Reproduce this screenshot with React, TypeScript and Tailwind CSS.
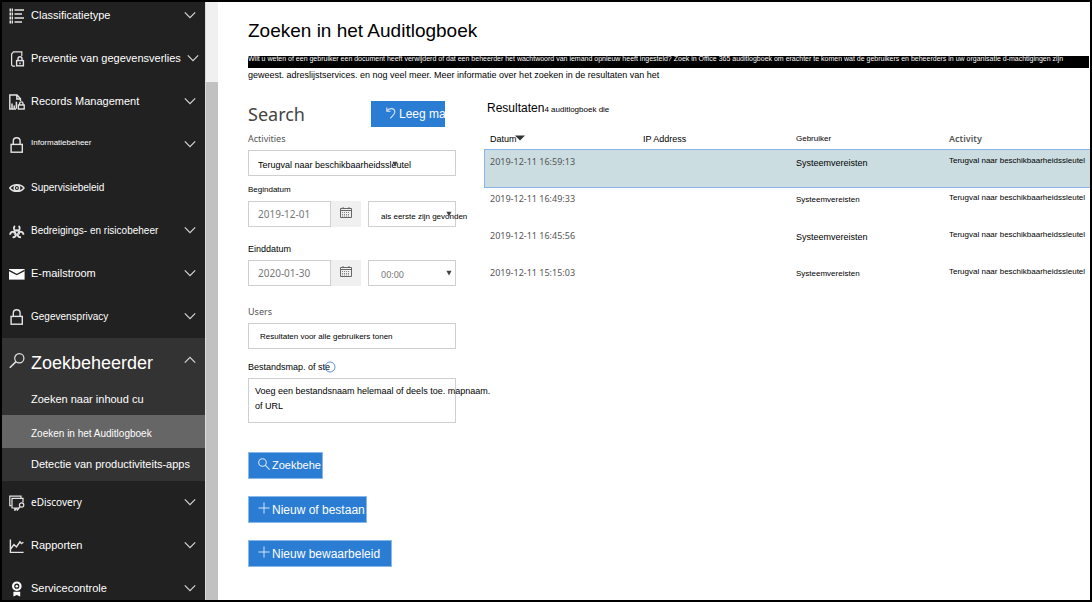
import React from "react";

const Icon = ({ children }: { children: React.ReactNode }) => (
  <svg viewBox="0 0 16 16" className="h-4 w-4 shrink-0" fill="none" stroke="#e4e4e4" strokeWidth="1.2" aria-hidden="true">
    {children}
  </svg>
);

const ListIcon = () => (
  <Icon>
    <path d="M5.5 2H15M5.5 6H13M5.5 10H15M5.5 14H13" strokeWidth="1.4" />
    <path d="M0.5 2H4M0.5 6H4M0.5 10H4M0.5 14H4" strokeWidth="3" strokeDasharray="1.5 0.6" />
  </Icon>
);
const PolicyIcon = () => (
  <Icon>
    <path d="M6 15.2H3.8L2.6 14V3L4.5 0.8H12.8V5" />
    <rect x="7.6" y="9.6" width="6.8" height="5.2" strokeWidth="1.4" />
    <path d="M9 9.5V7.8a2 2 0 0 1 4 0V9.5M11 11.5v1.8" strokeWidth="1.4" />
  </Icon>
);
const RecordsIcon = () => (
  <Icon>
    <path d="M7 15H0.8V1H8L11.5 4.8V7M7.8 1V5H11.5" strokeWidth="1.4" />
    <path d="M3 14.8V9.5M5.2 14.8V11.5M7.4 14.8V7.8" strokeWidth="1.5" />
    <rect x="9.4" y="11" width="5.8" height="4" strokeWidth="1.4" />
    <path d="M10.6 11V9.6a1.7 1.7 0 0 1 3.4 0V11" strokeWidth="1.4" />
  </Icon>
);
const LockIcon = () => (
  <Icon>
    <rect x="2.1" y="7.4" width="11.2" height="7.8" strokeWidth="1.4" />
    <path d="M4.3 7.4V4.2a3.4 3.4 0 0 1 6.8 0V7.4" strokeWidth="1.4" />
  </Icon>
);
const EyeIcon = () => (
  <Icon>
    <path d="M0.8 8C3.6 3.6 12.2 3.6 15 8C12.2 12.4 3.6 12.4 0.8 8Z" strokeWidth="1.4" />
    <circle cx="7.9" cy="8" r="2.7" strokeWidth="1.4" />
    <circle cx="7.9" cy="8" r="0.9" fill="#e4e4e4" stroke="none" />
  </Icon>
);
const HazardIcon = () => (
  <Icon>
    <circle cx="7.8" cy="9.6" r="2.9" strokeWidth="1" />
    <path d="M6 3C4 4.6 4.6 8 7.8 8C11 8 11.6 4.6 9.6 3" strokeWidth="1.8" />
    <path d="M1.2 11.8C1 8.8 4.8 7.8 6.6 9.8C8 12.2 6.4 14.6 3.6 14.2" strokeWidth="1.8" />
    <path d="M14.4 11.8C14.6 8.8 10.8 7.8 9 9.8C7.6 12.2 9.2 14.6 12 14.2" strokeWidth="1.8" />
    <circle cx="7.8" cy="9.4" r="0.9" fill="#212121" stroke="none" />
  </Icon>
);
const MailIcon = () => (
  <Icon>
    <path d="M0 3H15.6V13.6H0Z" fill="#fff" stroke="none" />
    <path d="M0 4.4L7.8 8.6L15.6 4.4" stroke="#212121" strokeWidth="1.3" />
  </Icon>
);
const SearchIcon = () => (
  <Icon>
    <circle cx="10.3" cy="5.3" r="4.6" />
    <path d="M7 8.6L0.8 14.8" strokeWidth="1.5" />
  </Icon>
);
const DiscoveryIcon = () => (
  <Icon>
    <path d="M2.5 10.6H0.8V1.2H12V3" />
    <path d="M9 13H3V3.4H14V7.5M5.8 13V15.4L8 13" />
    <circle cx="12.6" cy="10" r="2.2" />
    <path d="M11 11.8L7.8 15.4" strokeWidth="1.5" />
  </Icon>
);
const ChartIcon = () => (
  <Icon>
    <path d="M1.4 1.6V14.4H14.6" strokeWidth="1.4" />
    <path d="M1.6 11L5 6.6L7.4 9L11 3.8L12.4 5.6L14.4 4.2" strokeWidth="1.4" />
  </Icon>
);
const BadgeIcon = () => (
  <Icon>
    <circle cx="7.8" cy="5.2" r="3.7" stroke="#fff" strokeWidth="2.2" />
    <circle cx="7.8" cy="5.2" r="1.3" fill="#fff" stroke="none" />
    <path d="M4.4 10.8H11.2V15.6L7.8 14L4.4 15.6Z" fill="#fff" stroke="none" />
  </Icon>
);

const Chevron = ({ up }: { up?: boolean }) => (
  <svg viewBox="0 0 12 8" className="mb-[2px] ml-auto h-2 w-3 shrink-0" fill="none" stroke="#d6d6d6" strokeWidth="1.2" aria-hidden="true">
    <path d={up ? "M0.8 6.6L6 1.4L11.2 6.6" : "M0.8 1.4L6 6.6L11.2 1.4"} />
  </svg>
);

type Item = { label: string; icon: React.ReactNode; size: string; open?: boolean };

const topItems: Item[] = [
  { label: "Classificatietype", icon: <ListIcon />, size: "text-[11px]", open: false },
  { label: "Preventie van gegevensverlies", icon: <PolicyIcon />, size: "text-[11px]", open: false },
  { label: "Records Management", icon: <RecordsIcon />, size: "text-[11px]", open: false },
  { label: "Informatiebeheer", icon: <LockIcon />, size: "text-[8px] pb-1", open: false },
  { label: "Supervisiebeleid", icon: <EyeIcon />, size: "text-[10px]" },
  { label: "Bedreigings- en risicobeheer", icon: <HazardIcon />, size: "text-[10px]", open: false },
  { label: "E-mailstroom", icon: <MailIcon />, size: "text-[11px]", open: false },
  { label: "Gegevensprivacy", icon: <LockIcon />, size: "text-[10px]", open: false },
];
const bottomItems: Item[] = [
  { label: "eDiscovery", icon: <DiscoveryIcon />, size: "font-['Noto_Sans',sans-serif] text-[10px]", open: false },
  { label: "Rapporten", icon: <ChartIcon />, size: "text-[11px]", open: false },
  { label: "Servicecontrole", icon: <BadgeIcon />, size: "text-[11px]", open: false },
];

const NavItem = ({ item }: { item: Item }) => (
  <button type="button" className="flex h-[43px] w-full shrink-0 items-center gap-[6px] pr-[9px] pl-[7px] text-left whitespace-nowrap">
    {item.icon}
    <span className={item.size}>{item.label}</span>
    {item.open !== undefined && <Chevron />}
  </button>
);

const Arrow = ({ className }: { className: string }) => (
  <svg viewBox="0 0 6 6" className={"pointer-events-none absolute h-[6px] w-[6px] " + className} aria-hidden="true">
    <path d="M0.4 0.8H5.6L3 5.6Z" fill="#444" />
  </svg>
);

const DateRow = ({ id, label, labelClass, date, time, timeClass }: { id: string; label: string; labelClass: string; date: string; time: string; timeClass: string }) => (
  <div className="flex flex-col gap-[5px]">
    <label htmlFor={id} className={"leading-3 text-black " + labelClass}>{label}</label>
    <div className="flex h-[26px]">
      <input id={id} type="text" defaultValue={date} className="w-[83px] border border-[#cfcfcf] bg-white pl-[9px] font-['Noto_Sans',sans-serif] text-[10px] text-[#777]" />
      <button type="button" aria-label={"Kalender " + label} className="flex w-[30px] items-center justify-center bg-[#f0f0f0] pb-[2px]">
        <svg viewBox="0 0 12 12" className="h-3 w-3" fill="none" stroke="#666" aria-hidden="true">
          <path d="M0.5 1.5H11.5V10.5H0.5ZM0.5 3.5H11.5M3 0V2M9 0V2" />
          <path d="M2 5.5H10M2 7.5H10M2 9H10" strokeDasharray="1 1" strokeWidth="0.8" />
        </svg>
      </button>
      <div className="relative ml-[7px] w-[88px] border border-[#cfcfcf]">
        <select aria-label={"Tijd " + label} className={"h-6 w-[104px] appearance-none bg-transparent pl-3 " + timeClass}>
          <option>{time}</option>
        </select>
        <Arrow className="top-[9px] right-[3px]" />
      </div>
    </div>
  </div>
);

const rows = [
  { date: "2019-12-11 16:59:13", user: "text-[9px]" },
  { date: "2019-12-11 16:49:33", user: "text-[8px]" },
  { date: "2019-12-11 16:45:56", user: "text-[9px]" },
  { date: "2019-12-11 15:15:03", user: "text-[8px]" },
];

const actionClass = "flex h-[27px] items-center border border-[#8ab8ea] bg-[#2b7cd3] pl-[9px] whitespace-nowrap text-white";

const Plus = () => (
  <svg viewBox="0 0 12 12" className="mr-[2px] mb-1 h-3 w-3 shrink-0" fill="none" stroke="#d5e5f6" strokeWidth="1" aria-hidden="true">
    <path d="M6 0.5V11.5M0.5 6H11.5" />
  </svg>
);

export default function App() {
  return (
    <div className="flex h-screen overflow-hidden border-2 border-black bg-white font-['Liberation_Sans',Arial,sans-serif] text-black">
      <nav className="w-[203px] shrink-0 overflow-hidden bg-[#212121] text-white">
        <div className="-mt-2 flex flex-col">
          {topItems.map((item) => <NavItem key={item.label} item={item} />)}
          <div className="shrink-0 bg-[#333333]">
            <button type="button" className="flex h-[45px] w-full items-center gap-[6px] pr-[9px] pl-[7px] text-left">
              <SearchIcon />
              <span className="pt-[6px] text-[18px]">Zoekbeheerder</span>
              <Chevron up />
            </button>
            <a href="#inhoud" className="flex h-8 items-center pl-[29px] text-[11px]">Zoeken naar inhoud cu</a>
            <a href="#audit" aria-current="page" className="flex h-[33px] items-center bg-[#666666] pt-1 pl-[29px] text-[10px]">Zoeken in het Auditlogboek</a>
            <a href="#apps" className="flex h-[33px] items-center pl-[29px] text-[11px]">Detectie van productiviteits-apps</a>
          </div>
          {bottomItems.map((item) => <NavItem key={item.label} item={item} />)}
        </div>
      </nav>
      <div className="w-[13px] shrink-0 border-l border-[#dcdcdc] bg-[#c1c1c1]" aria-hidden="true">
        <div className="h-20 bg-[#f0f0f0]" />
      </div>

      <main className="min-w-0 flex-1 pt-[15px] pl-[30px]">
        <h1 className="text-[19px] leading-7">Zoeken in het Auditlogboek</h1>
        <p className="mt-[11px] mr-px text-[9px] leading-[14px]">
          <span className="block h-3 bg-black text-[7px] leading-[6px] whitespace-nowrap text-white">
            Wilt u weten of een gebruiker een document heeft verwijderd of dat een beheerder het wachtwoord van iemand opnieuw heeft ingesteld? Zoek in Office 365 auditlogboek om erachter te komen wat de gebruikers en beheerders in uw organisatie d-machtigingen zijn
          </span>
          geweest. adreslijstservices. en nog veel meer. Meer informatie over het zoeken in de resultaten van het
        </p>

        <div className="mt-[19px] flex gap-[29px]">
          <form className="w-[208px] shrink-0" onSubmit={(e) => e.preventDefault()}>
            <div className="flex h-[26px] items-center justify-between pr-[11px]">
              <h2 className="font-['Noto_Sans',sans-serif] text-[18px] text-[#444]">Search</h2>
              <button type="button" className="flex h-[26px] w-[74px] items-center bg-[#2b7cd3] pl-[15px] text-[12px] whitespace-nowrap text-white">
                <svg viewBox="0 0 10 12" className="mr-[3px] mb-[2px] h-3 w-[10px] shrink-0" fill="none" stroke="#d5e5f6" strokeWidth="1.1" aria-hidden="true">
                  <path d="M0.8 0.5V4.2H4.6M1 4C3 0.6 8.8 0.8 8.8 5C8.8 7.6 6 9 4.4 11.4" />
                </svg>
                Leeg ma
              </button>
            </div>

            <div className="mt-[6px] flex flex-col gap-[5px]">
              <label htmlFor="activities" className="font-['Noto_Sans',sans-serif] text-[9px] leading-3 text-[#555]">Activities</label>
              <div className="relative h-[26px] border border-[#cfcfcf]">
                <select id="activities" className="h-6 w-full appearance-none bg-transparent pl-[9px] text-[9px] text-black">
                  <option>Terugval naar beschikbaarheidssleutel</option>
                </select>
                <Arrow className="top-[10px] left-[143px]" />
              </div>
            </div>

            <div className="mt-2">
              <DateRow id="start" label="Begindatum" labelClass="text-[8px]" date="2019-12-01" time="als eerste zijn gevonden" timeClass="text-[8px] text-black" />
            </div>
            <div className="mt-4">
              <DateRow id="end" label="Einddatum" labelClass="text-[9px]" date="2020-01-30" time="00:00" timeClass="font-['Noto_Sans',sans-serif] text-[9px] text-[#777]" />
            </div>

            <div className="mt-5 flex flex-col gap-[5px]">
              <label htmlFor="users" className="font-['Noto_Sans',sans-serif] text-[9px] leading-3 text-[#555]">Users</label>
              <input id="users" type="text" placeholder="Resultaten voor alle gebruikers tonen" className="h-[26px] border border-[#cfcfcf] bg-white pl-[11px] text-[8px] placeholder:text-black" />
            </div>

            <div className="mt-3 flex flex-col items-start gap-[5px]">
              <label htmlFor="file" className="relative text-[9px] leading-3">
                Bestandsmap. of ste
                <svg viewBox="0 0 12 12" className="absolute top-0 -right-[6px] h-3 w-3" fill="none" stroke="#5b93dc" aria-hidden="true">
                  <circle cx="6" cy="6" r="5" />
                </svg>
              </label>
              <div className="h-[45px] w-full border border-[#cfcfcf]">
                <textarea id="file" placeholder={"Voeg een bestandsnaam helemaal of deels toe. mapnaam.\nof URL"} className="h-[43px] w-[252px] resize-none overflow-hidden bg-transparent pt-[5px] pl-[6px] text-[9px] leading-[15px] placeholder:text-black" />
              </div>
            </div>

            <div className="mt-[29px] flex flex-col items-start gap-[17px]">
              <button type="submit" className={actionClass + " w-[75px] text-[11px]"}>
                <svg viewBox="0 0 12 12" className="mr-[2px] mb-1 h-3 w-3 shrink-0" fill="none" stroke="#d5e5f6" strokeWidth="1.1" aria-hidden="true">
                  <circle cx="4.5" cy="4.5" r="3.8" />
                  <path d="M7.2 7.2L11.6 11.6" />
                </svg>
                Zoekbehe
              </button>
              <button type="button" className={actionClass + " w-[119px] text-[12px]"}><Plus />Nieuw of bestaan</button>
              <button type="button" className={actionClass + " w-[144px] text-[12px]"}><Plus />Nieuw bewaarbeleid</button>
            </div>
          </form>

          <section className="min-w-0 flex-1">
            <h2 className="pl-[2px] text-[12px] leading-[14px]">
              Resultaten<span className="text-[8px]">4 auditlogboek die</span>
            </h2>
            <table className="mt-[15px] w-full table-fixed border-collapse text-left">
              <colgroup>
                <col className="w-[158px]" />
                <col className="w-[153px]" />
                <col className="w-[153px]" />
                <col />
              </colgroup>
              <thead>
                <tr className="h-[18px] align-top leading-[14px] whitespace-nowrap">
                  <th className="pl-[5px] text-[9px] font-normal">
                    Datum
                    <svg viewBox="0 0 10 6" className="-ml-[2px] mb-[3px] inline h-[6px] w-[10px]" aria-hidden="true"><path d="M0 0.5H10L5 5.5Z" fill="#333" /></svg>
                  </th>
                  <th className="text-[9px] font-normal">IP Address</th>
                  <th className="text-[8px] font-normal">Gebruiker</th>
                  <th className="font-['Noto_Sans',sans-serif] text-[9px] font-semibold text-[#555]">Activity</th>
                </tr>
              </thead>
              <tbody>
                {rows.map((row, i) => (
                  <tr key={row.date} className={"h-[37px] align-top leading-[14px] whitespace-nowrap " + (i === 0 ? "bg-[#cbdde1] outline outline-1 outline-[#8db4ea]" : "")}>
                    <td className="pt-[5px] pl-[5px] font-['Noto_Sans',sans-serif] text-[9px] text-[#555]">{row.date}</td>
                    <td />
                    <td className={"pt-[6px] " + row.user}>Systeemvereisten</td>
                    <td className="pt-1 text-[8px]">Terugval naar beschikbaarheidssleutel</td>
                  </tr>
                ))}
              </tbody>
            </table>
          </section>
        </div>
      </main>
    </div>
  );
}
